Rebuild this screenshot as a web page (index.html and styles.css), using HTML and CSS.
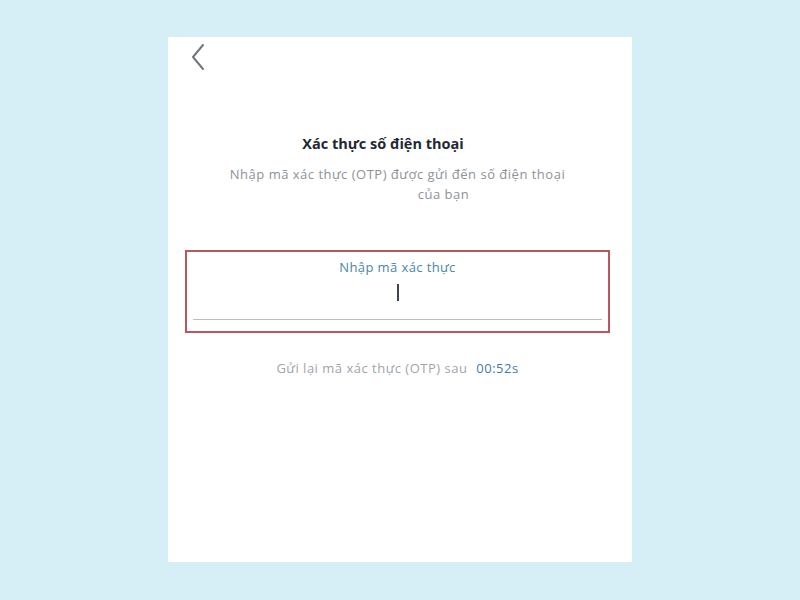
FILE: index.html
```html
<!DOCTYPE html>
<html lang="vi">
<head>
<meta charset="utf-8">
<link rel="stylesheet" href="styles.css">
</head>
<body>
<div class="page">
  <div class="card">
    <div class="topbar">
      <svg class="back" width="16" height="28" viewBox="0 0 16 28"><path d="M13 2 L3 14 L13 26" fill="none" stroke="#707780" stroke-width="2" stroke-linecap="round" stroke-linejoin="round"/></svg>
    </div>
    <h1 class="title">Xác thực số điện thoại</h1>
    <p class="sub">Nhập mã xác thực (OTP) được gửi đến số điện thoại<span class="sub2">của bạn</span></p>
    <div class="otp">
      <div class="label">Nhập mã xác thực</div>
      <div class="cursor"></div>
      <div class="line"></div>
    </div>
    <p class="resend">Gửi lại mã xác thực (OTP) sau <span class="timer">00:52s</span></p>
  </div>
</div>
</body>
</html>
```
FILE: styles.css
```css
html, body { margin: 0; padding: 0; }
body {
  width: 800px; height: 600px;
  background: #d6eef5;
  font-family: "Open Sans", "Liberation Sans", sans-serif;
  overflow: hidden;
}
.page { padding: 37px 0 0 168px; }
.card {
  width: 464px; height: 525px;
  background: #ffffff;
  box-sizing: border-box;
  padding: 6px 22px 0 17px;
  display: flex; flex-direction: column;
}
.topbar { height: 64px; padding-left: 5px; }
.back { display: block; }
.title {
  margin: 27px 0 0 0;
  font-size: 14.5px; font-weight: 700; color: #1f2833;
  text-align: center; padding-right: 29px; line-height: 20px;
}
.sub {
  margin: 10px 0 0 0;
  font-size: 13px; color: #8d9299; text-align: center;
  line-height: 20px; letter-spacing: 0.5px;
}
.sub2 { display: block; padding-left: 92px; }
.otp {
  margin-top: 46px;
  height: 83px; box-sizing: border-box;
  border: 2px solid #b85760;
  padding: 7px 6px 0 6px;
  display: flex; flex-direction: column; align-items: center;
}
.label { font-size: 13px; color: #4a86a8; line-height: 16px; letter-spacing: 0.4px; }
.cursor { width: 2px; height: 17px; background: #3c4651; margin-top: 9px; }
.line { align-self: stretch; height: 1px; background: #b8bec4; margin-top: 18px; }
.resend {
  margin: 26px 0 0 0; text-align: center;
  font-size: 13px; color: #a0a5ab; line-height: 18px; letter-spacing: 0.5px;
}
.timer { color: #3f7aa8; margin-left: 5px; font-weight: 500; }
```
